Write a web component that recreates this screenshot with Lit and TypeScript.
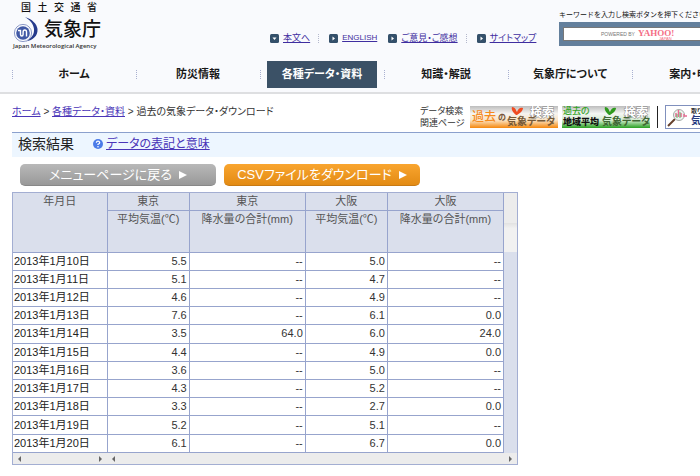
import { LitElement, html, svg, css } from "lit";
import { customElement } from "lit/decorators.js";
import { classMap } from "lit/directives/class-map.js";

const NAV = ["ホーム", "防災情報", "各種データ・資料", "知識・解説", "気象庁について", "案内・申請"];

const ROWS: [number, string, string, string, string][] = [
  [10, "5.5", "--", "5.0", "--"],
  [11, "5.1", "--", "4.7", "--"],
  [12, "4.6", "--", "4.9", "--"],
  [13, "7.6", "--", "6.1", "0.0"],
  [14, "3.5", "64.0", "6.0", "24.0"],
  [15, "4.4", "--", "4.9", "0.0"],
  [16, "3.6", "--", "5.0", "--"],
  [17, "4.3", "--", "5.2", "--"],
  [18, "3.3", "--", "2.7", "0.0"],
  [19, "5.2", "--", "5.1", "--"],
  [20, "6.1", "--", "6.7", "0.0"],
];

@customElement("jma-header")
export class JmaHeader extends LitElement {
  static styles = css`
    :host { display: block; background: #f9fafd; border-bottom: 2px solid #dedfe1; font-feature-settings: "palt"; }
    .top { display: flex; height: 61px; overflow: hidden; }
    .logo { flex: none; width: 90px; margin-left: 13px; color: #111; text-decoration: none; }
    .ministry { display: flex; justify-content: space-between; margin: 1px 6px 0 8px; font-size: 10px; line-height: 14px; font-weight: 500; }
    .brand { display: flex; gap: 3px; height: 27px; }
    .brand svg { flex: none; width: 28px; height: 28px; }
    .name { font-size: 19px; line-height: 30px; font-weight: 500; white-space: nowrap; font-feature-settings: normal; }
    .en { font: 600 6px/9px "Open Sans", sans-serif; white-space: nowrap; color: #333; }
    .links { display: flex; flex: none; align-items: center; width: 289px; margin-left: 167px; padding-top: 15px; box-sizing: border-box; font-size: 9px; }
    .links a { display: flex; align-items: center; gap: 4px; color: #3f2ea0; white-space: nowrap; line-height: 12px; }
    .links svg { width: 9px; height: 9px; }
    .links .latin { font-size: 8px; }
    .sep { width: 1px; height: 9px; margin: 0 9px 0 8px; border-left: 1px dotted #b4b8cc; }
    .gap { width: 11px; }
    .search { flex: none; width: 220px; padding-top: 8px; font-size: 7px; color: #111; }
    .search label { display: block; line-height: 13px; margin-bottom: 1px; white-space: nowrap; font-feature-settings: normal; }
    .box { display: grid; background: #637f9c; padding: 5px 4px; }
    .box > * { grid-area: 1 / 1; }
    .box input { width: 100%; height: 14px; box-sizing: border-box; border: 1px solid #777; background: #fff; padding: 0; }
    .mark { width: 80px; height: 14px; margin-left: 36px; pointer-events: none; }
    nav { display: flex; height: 31px; margin-left: 12px; overflow: hidden; }
    nav div { flex: none; width: 124px; height: 27px; display: flex; align-items: center; }
    nav div::before { content: ""; width: 0; height: 9px; border-left: 1px dotted #a9b0d0; }
    nav a { flex: 1; height: 27px; margin: 0 7px 0 6px; font-size: 11px; line-height: 27px; font-weight: 700; text-align: center; color: #181818; text-decoration: none; white-space: nowrap; }
    .on a { background: #3b5166; color: #fff; }
  `;

  private bullet(down = false) {
    return svg`<svg viewBox="0 0 9 9"><rect width="9" height="9" rx="1.5" fill="#34506a"/><path d="${down ? "M2.5 3.5h4L4.5 6z" : "M3.5 2.5v4L6 4.5z"}" fill="#fff"/></svg>`;
  }

  render() {
    return html`
      <div class="top">
        <a class="logo" href="#">
          <div class="ministry">${[..."国土交通省"].map((c) => html`<span>${c}</span>`)}</div>
          <div class="brand">
            <svg viewBox="0 0 28 28" aria-hidden="true">
              <path d="M12 2C19 4 24 9 24.500 14C25 21 20 25 13 26.500C19 23 21.500 19 21 14C20.500 9 17 5 12 2z" fill="#253a8c" />
              <circle cx="10" cy="18" r="8.6" fill="none" stroke="#8d9ac8" />
              <circle cx="10" cy="18" r="6.8" fill="#4058a5" />
              <path d="M5 15.500h2.500v4q0 1.500 1.300 1.500t1.300-1.500v-2.500q0-2 1.700-2t1.700 2v4.500" fill="none" stroke="#fff" stroke-width="1.400" />
            </svg>
            <span class="name">気象庁</span>
          </div>
          <div class="en">Japan Meteorological Agency</div>
        </a>
        <div class="links">
          <a href="#">${this.bullet(true)}<span>本文へ</span></a><i class="sep"></i>
          <a href="#">${this.bullet()}<span class="latin">ENGLISH</span></a><i class="gap"></i>
          <a href="#">${this.bullet()}<span>ご意見・ご感想</span></a><i class="sep"></i>
          <a href="#">${this.bullet()}<span>サイトマップ</span></a>
        </div>
        <div class="search">
          <label for="q">キーワードを入力し検索ボタンを押下ください。</label>
          <div class="box">
            <input id="q" type="text" />
            <svg class="mark" viewBox="0 0 80 14" aria-hidden="true">
              <text x="2" y="9" font-family="Liberation Sans" font-size="5" fill="#777">POWERED BY</text>
              <text x="39" y="9" font-family="Liberation Serif" font-weight="700" font-size="9" fill="#f46c84">YAHOO!</text>
              <text x="60" y="13" font-family="Liberation Sans" font-size="4" fill="#f46c84">JAPAN</text>
            </svg>
          </div>
        </div>
      </div>
      <nav>
        ${NAV.map((n, i) => html`<div class=${classMap({ on: i === 2 })}><a href="#">${n}</a></div>`)}
      </nav>
    `;
  }
}

@customElement("jma-related")
export class JmaRelated extends LitElement {
  static styles = css`
    :host { display: flex; align-items: center; padding-top: 8px; white-space: nowrap; }
    p { margin: 0 6px 0 0; width: 44px; font-size: 9px; line-height: 12px; color: #333; }
    a { display: block; margin-right: 4px; }
    svg { display: block; }
    .bar { width: 1px; height: 22px; background: #222; margin: 0 7px 0 3px; }
    text { font-family: "Noto Sans CJK JP", sans-serif; font-feature-settings: "palt"; }
    .outlined { fill: #fff; stroke: #888; stroke-width: 1px; paint-order: stroke; }
  `;

  render() {
    return html`
      <p>データ検索<br />関連ページ</p>
      <a href="#"><svg width="88" height="22">
        <defs><linearGradient id="o" x2="0" y2="1">
          <stop offset="0" stop-color="#bdbdbd" /><stop offset=".35" stop-color="#f6f4f1" /><stop offset=".65" stop-color="#fbe3c2" /><stop offset="1" stop-color="#f5870c" />
        </linearGradient></defs>
        <rect width="88" height="22" fill="url(#o)" />
        <text x="2" y="15" font-size="12" font-weight="500" fill="#f58a1c">過去</text>
        <text x="28" y="14" font-size="8" font-weight="700" fill="#75563a">の</text>
        <path d="M46 9C43 6 41 4 42 1C45 1 46 4 47 6C48 3 50 1 53 2C53 5 50 7 47 9z" fill="#f04c22" />
        <text class="outlined" x="60" y="11" font-size="12" font-weight="700">検索</text>
        <text x="37" y="19" font-size="10" font-weight="700" fill="#765a38">気象データ</text>
      </svg></a>
      <a href="#"><svg width="88" height="22">
        <defs><linearGradient id="g" x2="0" y2="1">
          <stop offset="0" stop-color="#bdbdbd" /><stop offset=".35" stop-color="#f4f6f3" /><stop offset=".65" stop-color="#d2eccf" /><stop offset="1" stop-color="#28a022" />
        </linearGradient></defs>
        <rect width="88" height="22" fill="url(#g)" />
        <text x="1" y="8" font-size="9" font-weight="500" fill="#35a528">過去の</text>
        <text x="1" y="19" font-size="9" font-weight="900" fill="#111">地域平均</text>
        <path d="M47 9C44 6 42 4 43 1C46 1 47 4 48 6C49 3 51 1 54 2C54 5 51 7 48 9z" fill="#2f9a1e" />
        <text class="outlined" x="62" y="11" font-size="12" font-weight="700">検索</text>
        <text x="40" y="19" font-size="10" font-weight="700" fill="#3f6634">気象データ</text>
      </svg></a>
      <i class="bar"></i>
      <a href="#"><svg width="88" height="24">
        <rect x=".5" y=".5" width="87" height="23" fill="#fff" stroke="#8090bd" />
        <path d="M3 21l7-7" stroke="#65402c" stroke-width="2" />
        <circle cx="14" cy="10" r="5.500" fill="#edf5ef" stroke="#a6aaa8" />
        <path d="M11 12V8M13.500 12V5M16 12V8M19 12V9M21 12V10" stroke="#e86b92" stroke-width="1.500" />
        <path d="M12 13V9M15 13V7" stroke="#65b36e" />
        <text x="26" y="8" font-size="6" font-weight="700" fill="#333">取り扱い</text>
        <text x="26" y="19" font-size="10" font-weight="700" fill="#263a80">気象データ</text>
      </svg></a>
    `;
  }
}

@customElement("jma-table")
export class JmaTable extends LitElement {
  static styles = css`
    :host { display: grid; grid-template-columns: auto 13px; width: max-content; border: 1px solid #a3aed2; color: #333; }
    table { height: 260px; border-collapse: collapse; table-layout: fixed; width: 491px; font: 11px/14px "Liberation Sans", "Noto Sans CJK JP", sans-serif; font-feature-settings: "palt"; }
    .date { width: 94px; }
    .temp { width: 82px; }
    .rain { width: 116px; }
    th, td { border: 1px solid #97a4cd; padding: 0 2px 1px 1px; box-sizing: border-box; white-space: nowrap; font-weight: 400; }
    thead th { background: #dadfec; color: #555; vertical-align: top; padding: 1px 0 0; text-align: center; }
    .place { height: 17px; }
    .item { height: 42px; }
    .place th { border-top: 0; }
    tr > :first-child:not(.mid) { border-left: 0; }
    tbody th { text-align: left; color: #222; }
    td { text-align: right; }
    .track { display: grid; grid-template-rows: 59px 1fr; background: #dadfec; }
    .track i { background: linear-gradient(#ececec 50%, #e2e2e2 51%, #f1f1f1 60%); }
    .scroll { grid-column: 1 / 3; display: grid; grid-template-columns: 94px 1fr; height: 11px; background: #ececec; }
    .scroll div { display: flex; justify-content: space-between; align-items: center; padding: 0 4px; }
    .scroll svg { width: 4px; height: 6px; fill: #666; }
  `;

  render() {
    const left = svg`<svg viewBox="0 0 4 6"><path d="M4 0v6L1 3z"/></svg>`;
    const right = svg`<svg viewBox="0 0 4 6"><path d="M0 0v6l3-3z"/></svg>`;
    return html`
      <table>
        <colgroup><col class="date" /><col class="temp" /><col class="rain" /><col class="temp" /><col class="rain" /></colgroup>
        <thead>
          <tr class="place"><th rowspan="2">年月日</th><th>東京</th><th>東京</th><th>大阪</th><th>大阪</th></tr>
          <tr class="item"><th class="mid">平均気温(℃)</th><th>降水量の合計(mm)</th><th>平均気温(℃)</th><th>降水量の合計(mm)</th></tr>
        </thead>
        <tbody>
          ${ROWS.map(([d, ...v]) => html`<tr><th scope="row">2013年1月${d}日</th>${v.map((x) => html`<td>${x}</td>`)}</tr>`)}
        </tbody>
      </table>
      <div class="track"><i></i></div>
      <div class="scroll"><div>${left}${right}</div><div>${left}${right}</div></div>
    `;
  }
}

@customElement("app-root")
export class AppRoot extends LitElement {
  static styles = css`
    :host { display: block; overflow: hidden; min-height: 100vh; background: #fff; color: #333; font-family: "Liberation Sans", "Noto Sans CJK JP", sans-serif; font-feature-settings: "palt"; }
    main { padding-left: 12px; }
    a { color: #4a35b8; }
    .crumbs { display: flex; height: 38px; align-items: center; font-size: 10px; white-space: nowrap; }
    .trail { flex: none; width: 408px; line-height: 14px; padding-bottom: 2px; }
    .title { display: flex; align-items: center; height: 24px; padding-left: 6px; border-top: 1px solid #8ba0cd; background: #edf6ff; }
    h1 { margin: 0 19px 0 0; padding-bottom: 2px; font-size: 14px; line-height: 20px; font-weight: 400; color: #222; font-feature-settings: normal; }
    .title svg { width: 10px; height: 10px; margin: 0 3px 2px 0; }
    .title a { font-size: 12px; line-height: 18px; padding-bottom: 2px; }
    .actions { display: flex; gap: 8px; padding: 7px 8px 6px; }
    button { width: 196px; height: 22px; padding: 0; border: 0; border-radius: 5px; color: #fff; font: 13px/20px "Liberation Sans", "Noto Sans CJK JP", sans-serif; font-feature-settings: "palt"; display: flex; align-items: center; justify-content: center; gap: 7px; white-space: nowrap; }
    button svg { width: 8px; height: 8px; fill: #fff; }
    .back { background: linear-gradient(#b8b8b8, #999); border-bottom: 1px solid #888; }
    .csv { background: linear-gradient(#f9a52f, #e38b14); border-bottom: 1px solid #c87a14; }
  `;

  render() {
    const arrow = svg`<svg viewBox="0 0 8 8"><path d="M0 0l8 4-8 4z"/></svg>`;
    return html`
      <jma-header></jma-header>
      <main>
        <div class="crumbs">
          <div class="trail"><a href="#">ホーム</a> &gt; <a href="#">各種データ・資料</a> &gt; 過去の気象データ・ダウンロード</div>
          <jma-related></jma-related>
        </div>
        <div class="title">
          <h1>検索結果</h1>
          <svg viewBox="0 0 10 10" aria-hidden="true"><circle cx="5" cy="5" r="5" fill="#4b7be8" /><path d="M3.300 3.800Q3.500 2.200 5 2.200T6.700 3.700Q6.700 4.500 5 5.300V6" fill="none" stroke="#fff" stroke-width="1.200" /><circle cx="5" cy="7.700" r=".8" fill="#fff" /></svg>
          <a href="#">データの表記と意味</a>
        </div>
        <div class="actions">
          <button class="back">メニューページに戻る${arrow}</button>
          <button class="csv">CSVファイルをダウンロード${arrow}</button>
        </div>
        <jma-table></jma-table>
      </main>
    `;
  }
}
